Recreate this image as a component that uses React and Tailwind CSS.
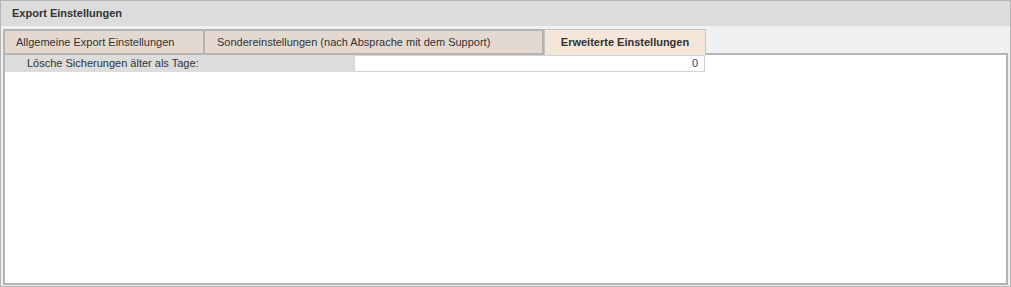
import React from "react";

const tabs = [
  { label: "Allgemeine Export Einstellungen", cls: "w-[202px] pl-[11px] border-2" },
  { label: "Sondereinstellungen (nach Absprache mit dem Support)", cls: "w-[339px] pl-[12px] border-2 border-l-0" },
];

export default function App() {
  return (
    <div
      className="w-[1011px] h-[287px] border border-[#b4b4b4] bg-[#f0f0f0] flex flex-col text-[11px] text-[#333333]"
      style={{ fontFamily: '"Liberation Sans", Arial, sans-serif' }}
    >
      {/* header */}
      <div className="h-[25px] bg-[#dcdcdc] flex items-center pl-[11px] font-bold shrink-0">
        Export Einstellungen
      </div>

      {/* tab strip */}
      <div className="flex mt-[3px] ml-[2px] h-[24px] shrink-0">
        {tabs.map((t) => (
          <div
            key={t.label}
            className={`${t.cls} h-full flex items-center bg-[#e3d9d0] border-b-0 border-[#b4b4b4]`}
          >
            {t.label}
          </div>
        ))}
        <div className="w-[162px] h-[26px] flex items-center justify-center bg-[#f5e6da] border border-b-0 border-[#c4c4c4] font-bold relative z-10">
          Erweiterte Einstellungen
        </div>
      </div>

      {/* content panel */}
      <div className="flex-1 mx-[2px] mb-[1px] border-2 border-[#b4b4b4] bg-white">
        <div className="flex h-[17px]">
          <div className="w-[349px] bg-[#dcdcdc] pl-[22px] flex items-center">
            Lösche Sicherungen älter als Tage:
          </div>
          <div className="w-[351px] border border-[#d4d4d4] flex items-center justify-end pr-[6px] text-[#35357a]">
            0
          </div>
        </div>
      </div>
    </div>
  );
}
